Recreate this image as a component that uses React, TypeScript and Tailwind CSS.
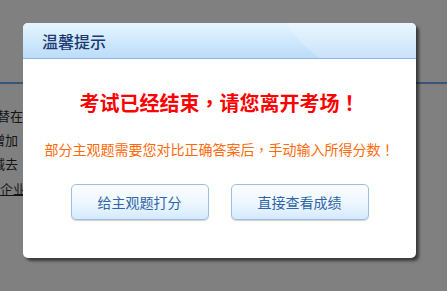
import React from "react";

const cjk = "font-['Noto_Sans_CJK_SC','Microsoft_YaHei',sans-serif]";
const punct = "font-['Noto_Sans_CJK_TC',sans-serif]";

function BackgroundPage() {
  return (
    <div className="pt-[82px]">
      <div className="h-[2px] w-full bg-[#3a5479]" />
      <div className={`mt-[20px] ml-[-3px] text-[13px] leading-6 text-[#141414] ${cjk}`}>
        <div>替在</div>
        <div className="ml-[-5px]">增加</div>
        <div className="ml-[-5px]">减去</div>
        <div className="ml-[3px] mt-[1px] underline">企业</div>
      </div>
    </div>
  );
}

function DialogButton({ label }: { label: string }) {
  return (
    <button className="h-[36px] w-[138px] rounded-[5px] border border-[#9dbfe2] bg-gradient-to-b from-[#fbfdff] via-[#eef7ff] to-[#d5eafd] text-[14px] text-[#2f65a3] shadow-[0_1px_1px_rgba(0,0,0,0.18)]">
      {label}
    </button>
  );
}

function ExamOverDialog() {
  return (
    <div
      className={`absolute left-[23px] top-[23px] flex h-[235px] w-[393px] flex-col overflow-hidden rounded-[5px] bg-white shadow-[3px_3px_3px_rgba(0,0,0,0.55)] ${cjk}`}
    >
      <div className="relative flex h-[36px] items-center overflow-hidden border-b border-[#8fb5e5] bg-gradient-to-b from-[#e5f5ff] to-[#bcdcf9] px-[19px]">
        <div className="absolute left-[250px] top-[-150px] h-[200px] w-[200px] rounded-full bg-white/20" />
        <span className="relative text-[16px] font-medium text-[#1b3a72]">温馨提示</span>
      </div>
      <div className="flex flex-1 flex-col items-center">
        <div className="mt-[32px] whitespace-nowrap text-[20px] font-bold leading-[24px] text-[#ff0000]">
          考试已经结束<span className={punct}>，</span>请您离开考场<span className={punct}>！</span>
        </div>
        <div className="mt-[24px] whitespace-nowrap text-[14px] leading-[20px] text-[#ff6a0a]">
          部分主观题需要您对比正确答案后<span className={punct}>，</span>手动输入所得分数<span className={punct}>！</span>
        </div>
        <div className="mt-[25px] flex gap-[22px]">
          <DialogButton label="给主观题打分" />
          <DialogButton label="直接查看成绩" />
        </div>
      </div>
    </div>
  );
}

export default function App() {
  return (
    <div className="relative h-[291px] w-[447px] overflow-hidden bg-[#808080]">
      <BackgroundPage />
      <ExamOverDialog />
    </div>
  );
}
